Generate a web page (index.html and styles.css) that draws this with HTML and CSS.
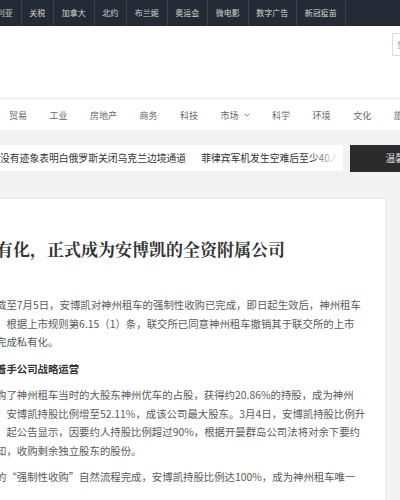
FILE: index.html
```html
<!DOCTYPE html>
<html lang="zh-CN">
<head>
<meta charset="utf-8">
<title>神州租车私有化</title>
<link rel="stylesheet" href="styles.css">
</head>
<body>
<div class="topbar">
  <ul class="topbar-list">
    <li>叙利亚</li>
    <li>关税</li>
    <li>加拿大</li>
    <li>北约</li>
    <li>布兰妮</li>
    <li>奥运会</li>
    <li>微电影</li>
    <li>数字广告</li>
    <li>新冠疫苗</li>
  </ul>
</div>
<header class="header">
  <div class="login-box">登录</div>
</header>
<nav class="nav">
  <span class="nav-item">贸易</span>
  <span class="nav-item">工业</span>
  <span class="nav-item">房地产</span>
  <span class="nav-item">商务</span>
  <span class="nav-item">科技</span>
  <span class="nav-item">市场<svg class="chev" width="6" height="4" viewBox="0 0 6 4"><path d="M0.5 0.6 L3 3.2 L5.5 0.6" fill="none" stroke="#888" stroke-width="1"/></svg></span>
  <span class="nav-item">科学</span>
  <span class="nav-item">环境</span>
  <span class="nav-item">文化</span>
  <span class="nav-item">旅游</span>
</nav>
<div class="ticker-row">
  <div class="ticker">
    <span class="ticker-item">没有迹象表明白俄罗斯关闭乌克兰边境通道</span>
    <span class="ticker-item">菲律宾军机发生空难后至少40人死亡</span>
    <div class="ticker-fade"></div>
  </div>
  <div class="ticker-btn">温馨提示</div>
</div>
<main class="card">
  <article class="article">
    <h1 class="title">有化，正式成为安博凯的全资附属公司</h1>
    <p class="para">截至7月5日，安博凯对神州租车的强制性收购已完成，即日起生效后，神州租车<br>，根据上市规则第6.15（1）条，联交所已同意神州租车撤销其于联交所的上市<br>完成私有化。</p>
    <h2 class="subhead">着手公司战略运营</h2>
    <p class="para">购了神州租车当时的大股东神州优车的占股，获得约20.86%的持股，成为神州<br>，安博凯持股比例增至52.11%，成该公司最大股东。3月4日，安博凯持股比例升<br>。起公告显示，因要约人持股比例超过90%，根据开曼群岛公司法将对余下要约<br>知，收购剩余独立股东的股份。</p>
    <p class="para">的“强制性收购”自然流程完成，安博凯持股比例达100%，成为神州租车唯一</p>
  </article>
</main>
</body>
</html>
```
FILE: styles.css
```css
html, body {
  margin: 0;
  padding: 0;
}
body {
  width: 400px;
  height: 500px;
  overflow: hidden;
  background: #f2f2f2;
  font-family: "Noto Sans CJK SC", "Noto Sans", sans-serif;
  color: #333;
}
.topbar {
  height: 26px;
  background: #252b36;
  overflow: hidden;
}
.topbar-list {
  list-style: none;
  margin: 0 0 0 -19px;
  padding: 0;
  display: flex;
  height: 26px;
}
.topbar-list li {
  padding: 0 7.75px;
  border-right: 1px solid #3c434e;
  font-size: 8px;
  line-height: 26px;
  color: #d4d4d4;
  white-space: nowrap;
}
.header {
  height: 71px;
  background: #fff;
  display: flex;
  justify-content: flex-end;
  align-items: flex-start;
  padding-top: 7px;
  box-sizing: border-box;
  overflow: hidden;
}
.login-box {
  flex: 0 0 60px;
  height: 23px;
  margin-right: -52px;
  border: 1px solid #dcdcdc;
  box-sizing: border-box;
  font-size: 8px;
  line-height: 21px;
  padding-left: 4px;
  color: #aaa;
}
.nav {
  margin-top: 3px;
  height: 30px;
  background: #fff;
  display: flex;
  align-items: center;
  gap: 22.5px;
  padding-left: 9px;
  overflow: hidden;
  white-space: nowrap;
}
.nav-item {
  font-size: 9px;
  color: #666;
  display: flex;
  align-items: center;
  flex: none;
}
.chev {
  margin-left: 5px;
}
.ticker-row {
  display: flex;
  align-items: flex-start;
  gap: 7px;
  margin-top: 15px;
  margin-left: -20px;
  white-space: nowrap;
}
.ticker {
  position: relative;
  flex: 0 0 363px;
  height: 26px;
  background: #fff;
  padding-left: 20px;
  box-sizing: border-box;
  overflow: hidden;
  display: flex;
  gap: 15px;
  font-size: 9.8px;
  line-height: 26px;
  color: #333;
}
.ticker-item {
  flex: none;
}
.ticker-fade {
  position: absolute;
  top: 0;
  right: 0;
  width: 32px;
  height: 100%;
  background: linear-gradient(to right, rgba(255,255,255,0), #fff 85%);
}
.ticker-btn {
  flex: 0 0 110px;
  height: 27px;
  background: #2b2b2b;
  color: #d8d8d8;
  font-size: 9.8px;
  line-height: 27px;
  text-align: center;
}
.card {
  margin-top: 26px;
  margin-left: -30px;
  width: 416px;
  height: 320px;
  box-sizing: border-box;
  background: #fff;
  border: 1px solid #e8e8e8;
  padding: 38px 0 0 25px;
  overflow: hidden;
}
.article {
  white-space: nowrap;
}
.title {
  margin: 0 0 35px;
  font-family: "Noto Serif CJK SC", "Noto Serif SC", "Noto Sans CJK SC", serif;
  font-size: 17px;
  line-height: 24px;
  font-weight: 700;
  color: #333;
}
.para {
  margin: 0 0 8px;
  font-size: 10.4px;
  line-height: 18.5px;
  color: #5a5a5a;
}
.subhead {
  margin: 0 0 8px;
  font-size: 10.4px;
  line-height: 18.5px;
  font-weight: 700;
  color: #333;
}
```
